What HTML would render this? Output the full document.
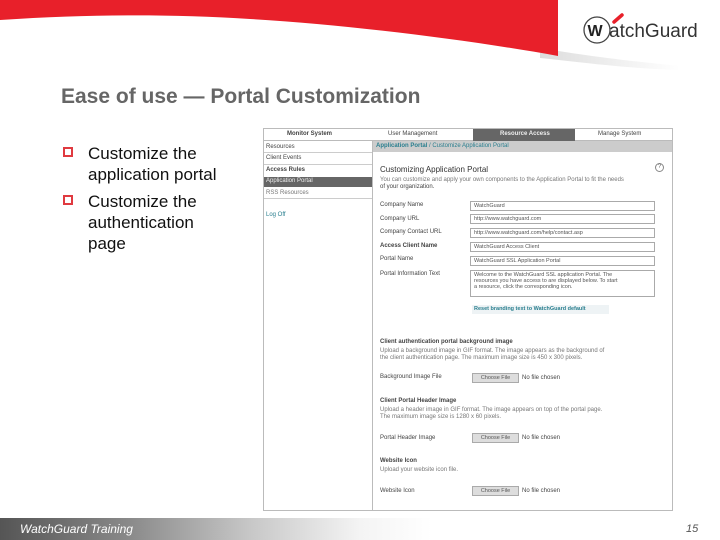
<!DOCTYPE html>
<html><head><meta charset="utf-8"><style>
*{margin:0;padding:0;box-sizing:border-box}
body{width:720px;height:540px;position:relative;overflow:hidden;background:#fff;font-family:"Liberation Sans",sans-serif}
.a{position:absolute}
.s{font-size:6px;color:#444;white-space:nowrap}
.in{position:absolute;border:1px solid #aaa;background:#fff;height:10px;font-size:5.5px;color:#555;padding-left:3px;line-height:8px;white-space:nowrap}
.btn{position:absolute;width:47px;height:10px;background:#ddd;border:1px solid #aaa;font-size:5.5px;color:#555;text-align:center;line-height:8px}
.ln{position:absolute;left:264px;width:108px;height:1px;background:#ccc}
</style></head><body>
<svg class="a" style="left:0;top:0" width="720" height="80">
<defs><linearGradient id="sh" x1="0" y1="0" x2="1" y2="0"><stop offset="0" stop-color="#ddd"/><stop offset="1" stop-color="#fff"/></linearGradient></defs>
<path d="M540 48 C600 58 640 62 680 66 L680 70 C620 68 580 62 540 58Z" fill="url(#sh)"/>
<path d="M0 0 H558 V56 C470 40 350 25 250 19 C170 14 90 14 0 20Z" fill="#e8202a"/>
<circle cx="597" cy="30" r="13" fill="none" stroke="#444" stroke-width="1.3"/>
<text x="587.5" y="36" font-family="Liberation Sans" font-weight="bold" font-size="16" fill="#222">W</text>
<path d="M614 22 L622 15" stroke="#e8202a" stroke-width="3.5" stroke-linecap="round"/>
<text x="609" y="37" font-family="Liberation Sans" font-size="19" fill="#333">atchGuard</text>
</svg>
<div class="a" style="left:61px;top:85px;font-size:21px;font-weight:bold;color:#666">Ease of use — Portal Customization</div>
<div class="a" style="left:63px;top:147px;width:10px;height:10px;border:2.5px solid #e03a40"></div>
<div class="a" style="left:63px;top:195px;width:10px;height:10px;border:2.5px solid #e03a40"></div>
<div class="a" style="left:88px;top:143px;font-size:17px;line-height:21px;color:#111">Customize the<br>application portal</div>
<div class="a" style="left:88px;top:191px;font-size:17px;line-height:21px;color:#111">Customize the<br>authentication<br>page</div>

<div class="a" style="left:263px;top:128px;width:410px;height:383px;border:1px solid #bbb;background:#fff"></div>
<div class="a" style="left:264px;top:129px;width:408px;height:12px;background:#fff;border-bottom:1px solid #bbb"></div>
<div class="a s" style="left:287px;top:131px;font-weight:bold">Monitor System</div>
<div class="a s" style="left:388px;top:131px">User Management</div>
<div class="a" style="left:473px;top:129px;width:102px;height:12px;background:#666"></div>
<div class="a s" style="left:500px;top:131px;color:#eee;font-weight:bold">Resource Access</div>
<div class="a s" style="left:598px;top:131px">Manage System</div>
<div class="a" style="left:372px;top:141px;width:1px;height:369px;background:#bbb"></div>
<div class="a" style="left:373px;top:141px;width:299px;height:11px;background:#ccc"></div>
<div class="a s" style="left:376px;top:143px;color:#2a7f8f;font-weight:bold">Application Portal <span style="font-weight:normal">/ Customize Application Portal</span></div>
<div class="ln" style="top:152px"></div>
<div class="ln" style="top:164px"></div>
<div class="ln" style="top:198px"></div>
<div class="a s" style="left:266px;top:144px">Resources</div>
<div class="a s" style="left:266px;top:155px">Client Events</div>
<div class="a s" style="left:266px;top:167px;font-weight:bold">Access Rules</div>
<div class="a" style="left:264px;top:177px;width:108px;height:10px;background:#666"></div>
<div class="a s" style="left:266px;top:178px;color:#eee">Application Portal</div>
<div class="a s" style="left:266px;top:190px;color:#777">RSS Resources</div>
<div class="a s" style="left:266px;top:212px;color:#2a7f8f">Log Off</div>

<div class="a" style="left:380px;top:165px;font-size:8px;color:#333">Customizing Application Portal</div>
<div class="a" style="left:655px;top:163px;width:9px;height:9px;border:1px solid #888;border-radius:50%;font-size:6px;text-align:center;line-height:7px;color:#666">?</div>
<div class="a s" style="left:380px;top:177px;color:#777">You can customize and apply your own components to the Application Portal to fit the needs</div>
<div class="a s" style="left:380px;top:184px">of your organization.</div>
<div class="a s" style="left:380px;top:202px">Company Name</div><div class="in" style="left:470px;top:201px;width:185px">WatchGuard</div>
<div class="a s" style="left:380px;top:216px">Company URL</div><div class="in" style="left:470px;top:214px;width:185px">http://www.watchguard.com</div>
<div class="a s" style="left:380px;top:229px">Company Contact URL</div><div class="in" style="left:470px;top:228px;width:185px">http://www.watchguard.com/help/contact.asp</div>
<div class="a s" style="left:380px;top:243px;font-weight:bold">Access Client Name</div><div class="in" style="left:470px;top:242px;width:185px">WatchGuard Access Client</div>
<div class="a s" style="left:380px;top:256px">Portal Name</div><div class="in" style="left:470px;top:256px;width:185px">WatchGuard SSL Application Portal</div>
<div class="a s" style="left:380px;top:271px">Portal Information Text</div>
<div class="in" style="left:470px;top:270px;width:185px;height:27px;line-height:6px;padding-top:1px">Welcome to the WatchGuard SSL application Portal. The<br>resources you have access to are displayed below. To start<br>a resource, click the corresponding icon.</div>
<div class="a" style="left:472px;top:305px;width:137px;height:9px;background:#eef3f5;font-size:5.5px;color:#2a7f8f;font-weight:bold;line-height:9px;padding-left:2px">Reset branding text to WatchGuard default</div>

<div class="a s" style="left:380px;top:339px;font-weight:bold">Client authentication portal background image</div>
<div class="a s" style="left:380px;top:348px;color:#777">Upload a background image in GIF format. The image appears as the background of</div>
<div class="a s" style="left:380px;top:355px;color:#777">the client authentication page. The maximum image size is 450 x 300 pixels.</div>
<div class="a s" style="left:380px;top:374px">Background Image File</div><div class="btn" style="left:472px;top:373px">Choose File</div><div class="a s" style="left:522px;top:375px">No file chosen</div>
<div class="a s" style="left:380px;top:398px;font-weight:bold">Client Portal Header Image</div>
<div class="a s" style="left:380px;top:407px;color:#777">Upload a header image in GIF format. The image appears on top of the portal page.</div>
<div class="a s" style="left:380px;top:414px;color:#777">The maximum image size is 1280 x 60 pixels.</div>
<div class="a s" style="left:380px;top:435px">Portal Header Image</div><div class="btn" style="left:472px;top:433px">Choose File</div><div class="a s" style="left:522px;top:435px">No file chosen</div>
<div class="a s" style="left:380px;top:458px;font-weight:bold">Website Icon</div>
<div class="a s" style="left:380px;top:467px;color:#777">Upload your website icon file.</div>
<div class="a s" style="left:380px;top:488px">Website Icon</div><div class="btn" style="left:472px;top:486px">Choose File</div><div class="a s" style="left:522px;top:488px">No file chosen</div>

<div class="a" style="left:0;top:518px;width:720px;height:22px;background:linear-gradient(90deg,#555 0%,#8a8a8a 18%,#c8c8c8 35%,#f4f4f4 50%,#fff 60%)"></div>
<div class="a" style="left:20px;top:522px;font-size:12px;font-style:italic;color:#fff">WatchGuard Training</div>
<div class="a" style="left:686px;top:523px;font-size:11px;font-style:italic;color:#555">15</div>
</body></html>
